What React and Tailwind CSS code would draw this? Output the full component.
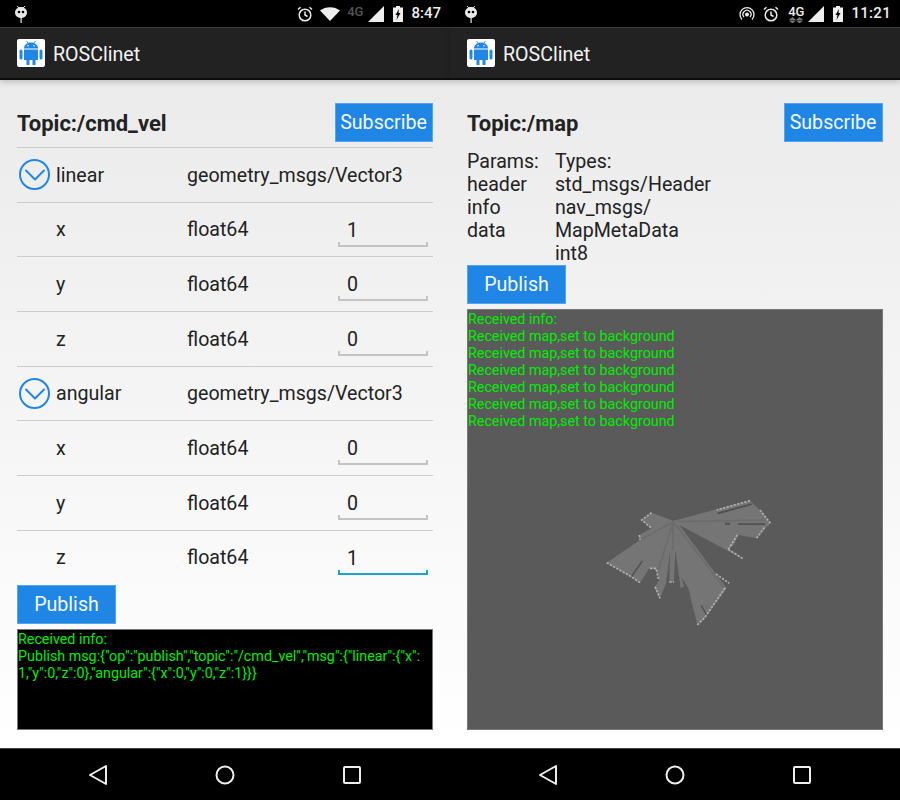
import { ChevronDown } from "lucide-react"

const font = { fontFamily: "Roboto, sans-serif" }

function Bugdroid() {
  return (
    <svg width="14" height="18" viewBox="0 0 14 18" fill="#e8e8e8">
      <path d="M3 1l2 2M11 1L9 3" stroke="#e8e8e8" strokeWidth="1" />
      <path d="M7 2c3.500 0 6 2.500 6 5.500S10.500 13 7 13 1 10.500 1 7.500 3.500 2 7 2z" />
      <circle cx="5" cy="7" r="1.300" fill="#000" />
      <circle cx="9" cy="7" r="1.300" fill="#000" />
      <rect x="6.500" y="13" width="1.200" height="5" />
    </svg>
  )
}

function Alarm() {
  return (
    <svg width="16" height="16" viewBox="0 0 16 16" fill="none" stroke="#eee" strokeWidth="1.500">
      <circle cx="8" cy="9" r="5.800" />
      <path d="M8 5.500V9l2.500 1.500M1 3.500L3.500 1.300M15 3.500L12.500 1.300" />
    </svg>
  )
}

function Wifi() {
  return (
    <svg width="20" height="14" viewBox="0 0 20 14">
      <path d="M0 3.500C5.500-1 14.500-1 20 3.500L10 14z" fill="#eee" />
    </svg>
  )
}

function Signal() {
  return (
    <svg width="16" height="16" viewBox="0 0 16 16">
      <path d="M16 0v16H0z" fill="#eee" />
    </svg>
  )
}

function Battery() {
  return (
    <svg width="10" height="16" viewBox="0 0 10 16">
      <path d="M3 0h4v1.500h3V16H0V1.500h3z" fill="#eee" />
      <path d="M6 3L2.500 9h2L3.500 14 7.500 7h-2z" fill="#000" />
    </svg>
  )
}

function Hotspot() {
  return (
    <svg width="16" height="16" viewBox="0 0 16 16" fill="none" stroke="#eee" strokeWidth="1.300">
      <circle cx="8" cy="8.500" r="1.300" fill="#eee" />
      <path d="M5 11a4 4 0 1 1 6 0M3 13.500a7 7 0 1 1 10 0" />
    </svg>
  )
}

function Four({ active }) {
  return (
    <span className={`relative flex flex-col items-center -top-[2px] text-[13px] leading-none font-medium ${active ? "text-[#eeeeee]" : "text-[#555555]"}`}>
      4G
      {active && (
        <svg className="absolute top-[12px]" width="14" height="6" viewBox="0 0 14 6" fill="#777">
          <path d="M3.500 0L7 3H0zM0 3.500h7L3.500 6.500zM10.500 0L14 3H7zM7 3.500h7l-3.500 3z" />
        </svg>
      )}
    </span>
  )
}

function StatusBar({ time, alt }) {
  return (
    <div className="h-[27px] bg-black flex items-center justify-between pl-[14px] pr-[9px]">
      <Bugdroid />
      {alt ? (
        <div className="flex items-center">
          <Hotspot />
          <span className="w-[8px]" />
          <Alarm />
          <span className="w-[9px]" />
          <Four active />
          <span className="w-[4px]" />
          <Signal />
          <span className="w-[9px]" />
          <Battery />
          <span className="w-[8px]" />
          <span className="text-[15px] tracking-[0.3px] text-[#eeeeee] font-medium">{time}</span>
        </div>
      ) : (
        <div className="flex items-center">
          <Alarm />
          <span className="w-[7px]" />
          <Wifi />
          <span className="w-[7px]" />
          <Four />
          <span className="w-[5px]" />
          <Signal />
          <span className="w-[9px]" />
          <Battery />
          <span className="w-[8px]" />
          <span className="text-[15px] text-[#eeeeee] font-medium">{time}</span>
        </div>
      )}
    </div>
  )
}

function AppIcon() {
  return (
    <div className="w-[28px] h-[28px] bg-white rounded-[2px] flex items-center justify-center">
      <svg width="24" height="26" viewBox="0 0 24 26" fill="#2286e6">
        <path d="M7.500 1l2 2.500M16.500 1l-2 2.500" stroke="#2286e6" strokeWidth="1" />
        <path d="M5 8.500C5 5 8 2.500 12 2.500S19 5 19 8.500z" />
        <circle cx="9" cy="5.700" r="0.800" fill="#fff" />
        <circle cx="15" cy="5.700" r="0.800" fill="#fff" />
        <path d="M5 9.500h14V20h-2.500v5h-3v-5h-3v5h-3v-5H5z" />
        <rect x="0.500" y="9.500" width="3" height="10" rx="1.500" />
        <rect x="20.500" y="9.500" width="3" height="10" rx="1.500" />
      </svg>
    </div>
  )
}

function ActionBar() {
  return (
    <div className="relative z-10 h-[53px] bg-[#222222] border-t border-t-[#3c3c3c] border-b-2 border-b-[#0c0c0c] shadow-[0_2px_6px_rgba(0,0,0,0.2)] flex items-center pl-[17px] gap-[8px]">
      <AppIcon />
      <span className="text-[19.600px] text-[#f2f2f2] mt-[3px]">ROSClinet</span>
    </div>
  )
}

function NavBar() {
  return (
    <div className="h-[52px] bg-black border-t border-t-[#444444] grid grid-cols-3 px-[34.500px] items-center">
      <div className="flex justify-center">
        <svg width="20" height="22" viewBox="0 0 20 22" fill="none" stroke="#eee" strokeWidth="2" strokeLinejoin="round">
          <path d="M18 2v18L2 11z" />
        </svg>
      </div>
      <div className="flex justify-center">
        <svg width="20" height="20" viewBox="0 0 20 20" fill="none" stroke="#eee" strokeWidth="2">
          <circle cx="10" cy="10" r="8.500" />
        </svg>
      </div>
      <div className="flex justify-center">
        <svg width="18" height="18" viewBox="0 0 18 18" fill="none" stroke="#eee" strokeWidth="2" strokeLinejoin="round">
          <rect x="1" y="1" width="16" height="16" rx="1" />
        </svg>
      </div>
    </div>
  )
}

function BlueButton({ children, className }) {
  return (
    <button className={`h-[39px] pt-px bg-[#2086e6] border border-[#55a5ee] text-[19.600px] text-[#f4f8fd] ${className}`}>
      {children}
    </button>
  )
}

function ParentRow({ name, type }) {
  return (
    <div className="h-[54.700px] border-b border-b-[#cccccc] grid grid-cols-[170px_1fr] items-center">
      <div className="flex items-center gap-[6px] pl-[2px]">
        <div className="w-[31px] h-[31px] shrink-0 rounded-full border-2 border-[#2086e6] flex items-center justify-center">
          <ChevronDown className="w-[36px] h-[36px] shrink-0 text-[#2086e6]" strokeWidth={1.300} />
        </div>
        <span className="mt-[1px]">{name}</span>
      </div>
      <span className="mt-[1px]">{type}</span>
    </div>
  )
}

function FieldRow({ name, value, focused, noLine }) {
  const tick = focused ? "bg-[#1da5c9]" : "bg-[#c4c4c4]"
  return (
    <div className={`grid grid-cols-[170px_151px_90px] items-center ${noLine ? "h-[53.700px]" : "h-[54.700px] border-b border-b-[#cccccc]"}`}>
      <span className="pl-[39px] mt-[1px]">{name}</span>
      <span className="mt-[1px]">float64</span>
      <div className={`relative h-[31px] mt-[3px] pl-[9px] border-b-2 leading-[29px] ${focused ? "border-b-[#1da5c9]" : "border-b-[#c4c4c4]"}`}>
        {value}
        <span className={`absolute left-0 -bottom-[2px] w-[2px] h-[5px] ${tick}`} />
        <span className={`absolute right-0 -bottom-[2px] w-[2px] h-[5px] ${tick}`} />
      </div>
    </div>
  )
}

function Title({ text }) {
  return <h1 className="text-[22px] font-bold text-[#222222] mt-[2px]">{text}</h1>
}

function CmdVelPanel() {
  return (
    <div className="flex-1 flex flex-col pl-[17px] pr-[17.500px] pt-[23px] pb-[18px] bg-gradient-to-b from-[#ebebeb] to-[#ffffff] text-[19.600px] text-[#222222]">
      <div className="h-[45px] shrink-0 border-b border-b-[#cccccc] flex items-start justify-between">
        <div className="h-[39px] flex items-center"><Title text="Topic:/cmd_vel" /></div>
        <BlueButton className="w-[98px]">Subscribe</BlueButton>
      </div>
      <ParentRow name="linear" type="geometry_msgs/Vector3" />
      <FieldRow name="x" value="1" />
      <FieldRow name="y" value="0" />
      <FieldRow name="z" value="0" />
      <ParentRow name="angular" type="geometry_msgs/Vector3" />
      <FieldRow name="x" value="0" />
      <FieldRow name="y" value="0" />
      <FieldRow name="z" value="1" focused noLine />
      <BlueButton className="w-[99px] shrink-0">Publish</BlueButton>
      <div className="mt-[5px] flex-1 bg-black border border-[#777777] text-[#00ee00] text-[14.300px] leading-[17px] pt-px">
        <p>Received info:</p>
        <p>
          Publish msg:{'{"op":"publish","topic":"/cmd_vel","msg":{"linear":{"x":'}
          <br />
          {'1,"y":0,"z":0},"angular":{"x":0,"y":0,"z":1}}}'}
        </p>
      </div>
    </div>
  )
}

function MapScan() {
  return (
    <svg className="absolute left-[122px] top-[180px] blur-[0.4px]" width="200" height="150" viewBox="0 0 600 450">
      <path
        d="M250 92L185 68 155 90 185 115 148 135 150 150 50 218 120 258 150 278 178 235 200 240 208 270 195 290 210 325 228 280 240 185 238 278 252 276 256 180 272 295 282 290 275 262 295 295 322 405 345 385 410 295 378 252 268 105 460 207 415 178 432 165 445 135 500 145 540 100 510 60 480 32z"
        fill="#757575"
      />
      <path d="M405 98h15v6h-15zM445 100h80v5h-80zM380 68l105-28v5l-100 28zM335 345l18 30-3 3-18-30zM155 212l-32 46 4 2 32-46z" fill="#505050" />
      <path d="M250 95L150 150M250 95L205 240M250 95L248 180M250 95L400 290M262 95L530 90" fill="none" stroke="#6c6c6c" strokeWidth="5" />
      <path
        d="M50 218l70 40 30 20M180 235h18l8 35M195 290l15 35M322 405l22-22 62-90M378 252l40 28M185 68l-30 22 30 25M148 135l2 15M480 32l-100 28M510 60l30 38-5 6M500 145l25-35M415 178l28-45M415 178l45 29M238 276h14"
        fill="none"
        stroke="#bdbdbd"
        strokeWidth="5"
        strokeDasharray="7 4"
        opacity="0.85"
      />
    </svg>
  )
}

function MapPanel() {
  return (
    <div className="flex-1 flex flex-col pl-[17px] pr-[17.500px] pt-[23px] pb-[18px] bg-gradient-to-b from-[#ebebeb] to-[#ffffff] text-[19.600px] text-[#222222]">
      <div className="h-[47px] shrink-0 flex items-start justify-between">
        <div className="h-[39px] flex items-center"><Title text="Topic:/map" /></div>
        <BlueButton className="w-[99px]">Subscribe</BlueButton>
      </div>
      <div className="grid grid-cols-[88px_1fr] leading-[23px] shrink-0">
        <div>
          <p>Params:</p>
          <p>header</p>
          <p>info</p>
          <p>data</p>
        </div>
        <div>
          <p>Types:</p>
          <p>std_msgs/Header</p>
          <p>nav_msgs/</p>
          <p>MapMetaData</p>
          <p>int8</p>
        </div>
      </div>
      <BlueButton className="w-[99px] shrink-0">Publish</BlueButton>
      <div className="relative mt-[5px] flex-1 bg-[#5a5a5a] border border-[#777777] text-[#00ee00] text-[14.300px] leading-[17px] pt-px">
        <p>Received info:</p>
        <p>Received map,set to background</p>
        <p>Received map,set to background</p>
        <p>Received map,set to background</p>
        <p>Received map,set to background</p>
        <p>Received map,set to background</p>
        <p>Received map,set to background</p>
        <MapScan />
      </div>
    </div>
  )
}

function Phone({ time, alt, children }) {
  return (
    <div className="w-[450px] h-[800px] flex flex-col">
      <StatusBar time={time} alt={alt} />
      <ActionBar />
      {children}
      <NavBar />
    </div>
  )
}

export default function App() {
  return (
    <div className="w-[900px] h-[800px] flex bg-white" style={font}>
      <Phone time="8:47">
        <CmdVelPanel />
      </Phone>
      <Phone time="11:21" alt>
        <MapPanel />
      </Phone>
    </div>
  )
}
